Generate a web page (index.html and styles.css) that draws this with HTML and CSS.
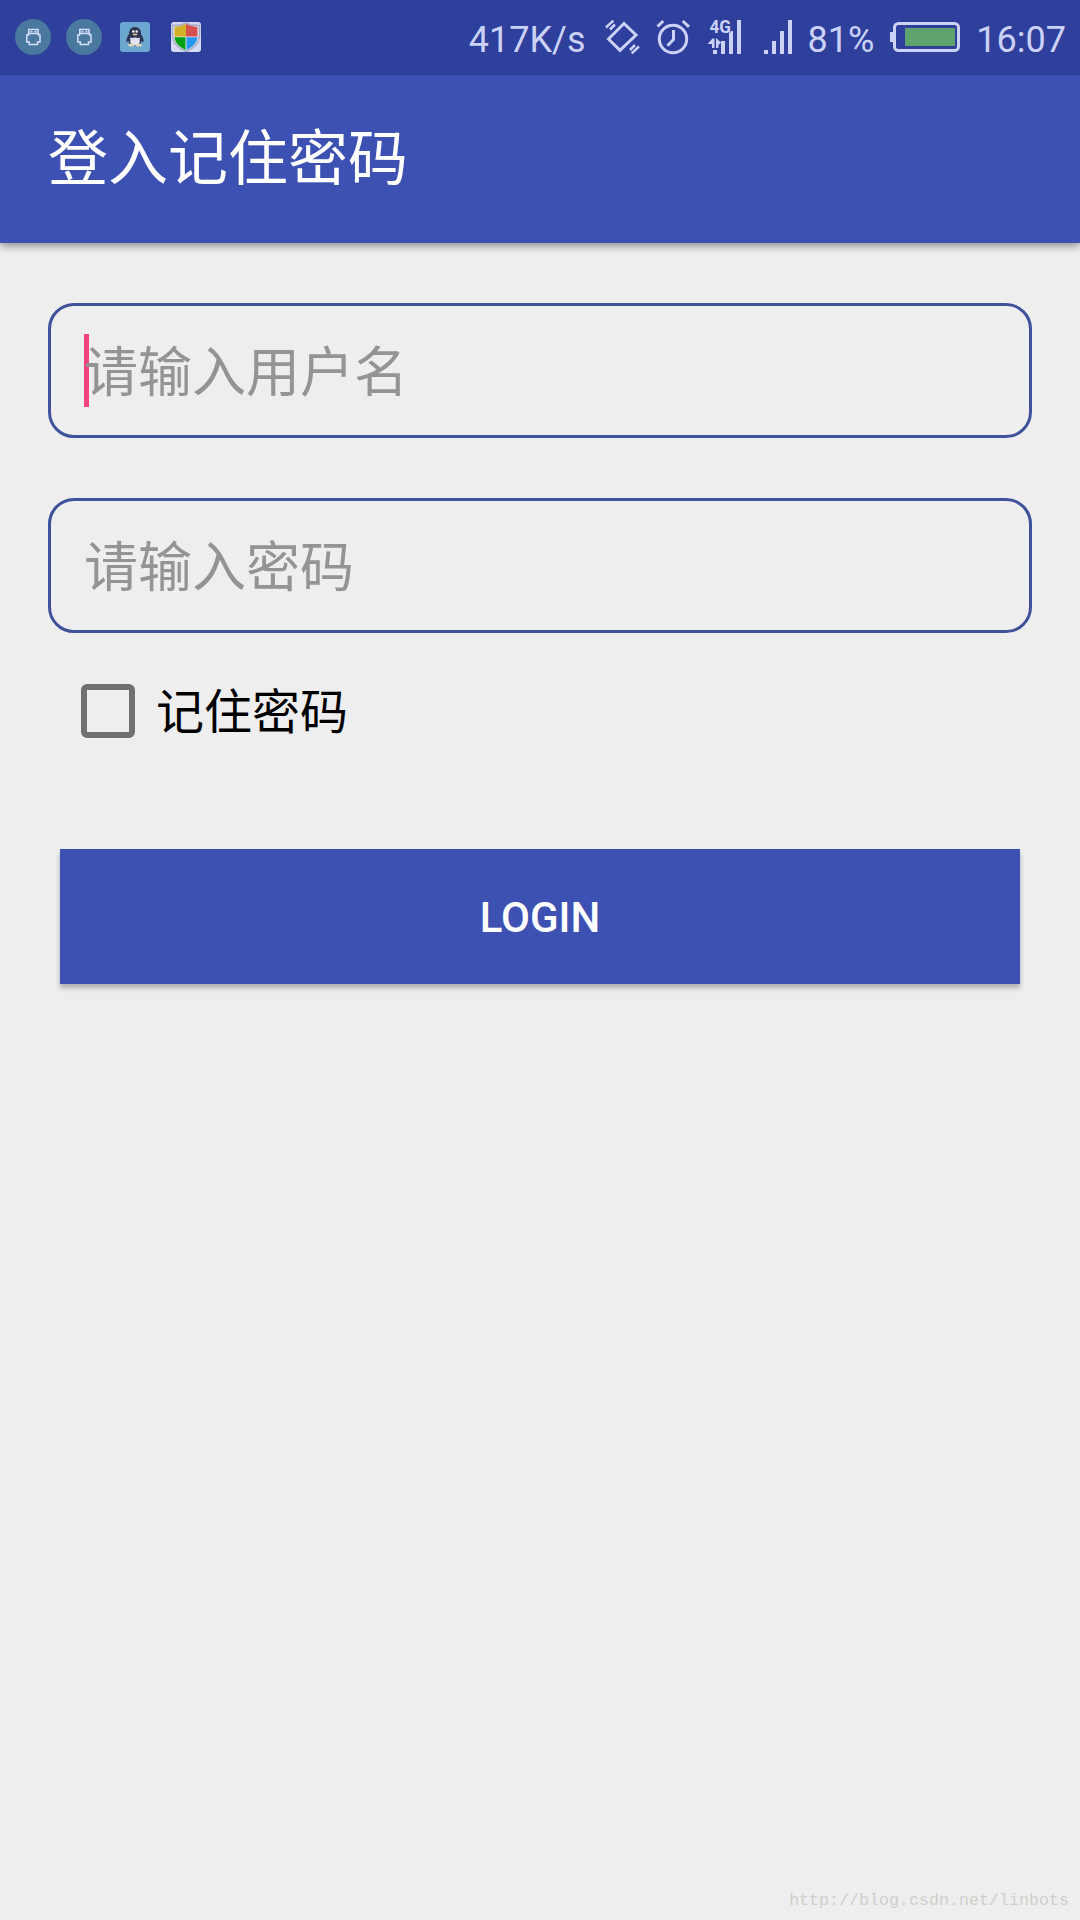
FILE: index.html
```html
<!DOCTYPE html>
<html lang="zh-CN">
<head>
<meta charset="utf-8">
<title>登入记住密码</title>
<link rel="stylesheet" href="styles.css">
</head>
<body>
<header class="status">
  <div class="notifications">
    <svg width="36" height="75" viewBox="15 0 36 75"><circle cx="33" cy="37" r="18" fill="#4a789e"/><path d="M28.800 33.500V29.500H38V33.500M28.500 33.500H38.500V35H40V42H37.500V44.600H29.300V42H26.800V35H28.500Z" fill="none" stroke="#d5e0fc" stroke-width="1.500"/><path d="M30.500 31h2v1.600h-2zM34.500 31h2v1.600h-2z" fill="#d5e0fc"/></svg>
    <svg width="36" height="75" viewBox="15 0 36 75"><circle cx="33" cy="37" r="18" fill="#4a789e"/><path d="M28.800 33.500V29.500H38V33.500M28.500 33.500H38.500V35H40V42H37.500V44.600H29.300V42H26.800V35H28.500Z" fill="none" stroke="#d5e0fc" stroke-width="1.500"/><path d="M30.500 31h2v1.600h-2zM34.500 31h2v1.600h-2z" fill="#d5e0fc"/></svg>
    <svg class="qq" width="30" height="75" viewBox="120 0 30 75"><rect x="120" y="22" width="30" height="30" rx="3" fill="#6ba7d0"/><path d="M135 27c-4 0-6 3-6 7-2 3-3 6-2.500 8 1 0 1.500-.5 2-1 .5 4 3 5 6.500 5s6-1 6.500-5c.5.5 1 1 2 1 .5-2-.5-5-2.500-8 0-4-2-7-6-7Z" fill="#2c3451"/><ellipse cx="135" cy="41.500" rx="4.800" ry="4" fill="#e2e5f5"/><path d="M130 37.500q5 2 10 0v2q-5 2-10 0Z" fill="#d8dcee"/><circle cx="133.300" cy="31.500" r="1.200" fill="#fff"/><circle cx="136.700" cy="31.500" r="1.200" fill="#fff"/><ellipse cx="135" cy="34.500" rx="2.500" ry="1" fill="#d9c08d"/><ellipse cx="131.200" cy="45" rx="3" ry="1.500" fill="#ded6b4"/><ellipse cx="138.800" cy="45" rx="3" ry="1.500" fill="#ded6b4"/></svg>
    <svg class="shield" width="30" height="75" viewBox="171 0 30 75"><rect x="171" y="22" width="30" height="30" rx="3" fill="#d4daf3"/><path d="M186 23.200Q192 26 199.500 25.500V36Q199 46 186 51.500 173 46 172.500 36V25.500Q180 26 186 23.200Z" fill="#e3e4ec" stroke="#a5a9c4" stroke-width="1.500"/><path d="M186 24Q180 27 174.500 27V36.500H186Z" fill="#d4af28"/><path d="M186 24Q192 27 197.500 27V36.500H186Z" fill="#d4514e"/><path d="M174.500 37.200H185.500V50Q175 45 174.500 37.200Z" fill="#00a015"/><path d="M186.500 37.200H197.500Q197 45 186.500 50Z" fill="#2798ef"/></svg>
  </div>
  <div class="system">
    <span class="speed">417K/s</span>
    <svg class="vibrate" width="36" height="75" viewBox="604 0 36 75" fill="none" stroke="#ccd2f6"><path stroke-width="3" d="M624 23.500 636 35 620 50.300 608.500 39Z"/><path stroke-width="2.500" d="M606 27.500 613.300 20.700M610 29.500 615 24.500M630 50 635 45M631.700 53.300 639 46.500"/></svg>
    <svg class="alarm" width="34" height="75" viewBox="656 0 34 75" fill="none" stroke="#ccd2f6" stroke-width="3"><circle cx="673" cy="39" r="13.700"/><path d="M673.500 30V39.500L667.500 45.700M657.500 26.500 663.300 21M682.700 21 689 26.800"/></svg>
    <svg class="signal-4g" width="34" height="75" viewBox="707 0 34 75" fill="#ccd2f6"><path d="M713 50h4v4h-4zM721 41h4v13h-4zM729 31h4v23h-4zM737 20h4v34h-4z"/><text class="network" x="709.500" y="33" textLength="21.500" lengthAdjust="spacingAndGlyphs">4G</text><path d="M707.500 44 712.500 38.500H714.500V48H712V44ZM716 38 721 42.500 718.500 45V48H716Z"/></svg>
    <svg class="signal" width="28" height="75" viewBox="764 0 28 75" fill="#ccd2f6"><path d="M764 50h4v4h-4zM772 41h4v13h-4zM780 31h4v23h-4zM788 20h4v34h-4z"/></svg>
    <span class="percent">81%</span>
    <svg class="battery" width="70" height="75" viewBox="890 0 70 75"><path d="M890 32h3v10h-3z" fill="#ccd2f6"/><rect x="894.500" y="23.500" width="64" height="27" rx="4" fill="none" stroke="#ccd2f6" stroke-width="3"/><path d="M905 28h50v18h-50z" fill="#5fa46f"/></svg>
    <span class="clock">16:07</span>
  </div>
</header>
<div class="appbar"><h1>登入记住密码</h1></div>
<main>
  <div class="field"><i class="caret"></i><span>请输入用户名</span></div>
  <div class="field"><span>请输入密码</span></div>
  <div class="remember"><span class="box"></span><span class="label">记住密码</span></div>
  <button class="login">LOGIN</button>
</main>
<footer>http://blog.csdn.net/linbots</footer>
</body>
</html>
```

FILE: styles.css
```css
* { box-sizing: border-box; }
body {
  margin: 0;
  height: 1920px;
  display: flex;
  flex-direction: column;
  background: #eee;
  font-family: Roboto, "Noto Sans CJK SC", sans-serif;
  overflow: hidden;
}
svg { display: block; flex: none; }
.status {
  position: relative;
  z-index: 1;
  height: 75px;
  flex: none;
  display: flex;
  justify-content: space-between;
  background: #2e3f9c;
  color: #ccd2f6;
  font-size: 36px;
  line-height: 81px;
}
.notifications { display: flex; padding-left: 15px; gap: 15px; }
.qq { margin-left: 3px; }
.shield { margin-left: 6px; }
.system { display: flex; padding-right: 14px; white-space: nowrap; }
.vibrate { margin-left: 18px; }
.alarm { margin-left: 16px; }
.signal-4g { margin-left: 17px; }
.signal { margin-left: 23px; }
.percent { margin-left: 16px; }
.battery { margin-left: 16px; }
.clock { margin-left: 16px; }
.network { font: 700 18px Roboto, sans-serif; stroke: #2e3f9c; stroke-width: 1.5px; paint-order: stroke; }
.appbar {
  height: 168px;
  flex: none;
  padding: 2px 48px 0;
  display: flex;
  align-items: center;
  background: #3d51b3;
  box-shadow: 0 3px 8px rgba(0, 0, 0, .4);
}
h1 { margin: 0; color: #fff; font-size: 60px; font-weight: 400; line-height: 88px; }
main { padding: 60px 48px 0; display: flex; flex-direction: column; }
.field {
  position: relative;
  height: 135px;
  margin-bottom: 60px;
  padding-left: 33px;
  border: 3px solid #40519b;
  border-radius: 26px;
  color: #949494;
  font-size: 54px;
  line-height: 135px;
}
.caret { position: absolute; left: 33px; top: 28px; width: 5px; height: 73px; background: #f04380; }
.field span { position: relative; }
.remember {
  height: 96px;
  margin-top: -30px;
  padding-left: 33px;
  display: flex;
  align-items: center;
  gap: 21px;
  color: #000;
  font-size: 48px;
}
.box { width: 54px; height: 54px; border: 6px solid #707070; border-radius: 6px; }
.label { padding-bottom: 7px; }
.login {
  height: 135px;
  margin: 90px 12px 0;
  padding: 3px 0 0;
  border: 0;
  background: #3d51b3;
  box-shadow: 0 4px 5px rgba(0, 0, 0, .27);
  color: #fff;
  font: 500 42px/132px Roboto, sans-serif;
}
footer {
  margin-top: auto;
  padding: 0 11px 7px 0;
  text-align: right;
  color: #cfcfcc;
  font: 16.670px/24px "Liberation Mono", monospace;
}
```
